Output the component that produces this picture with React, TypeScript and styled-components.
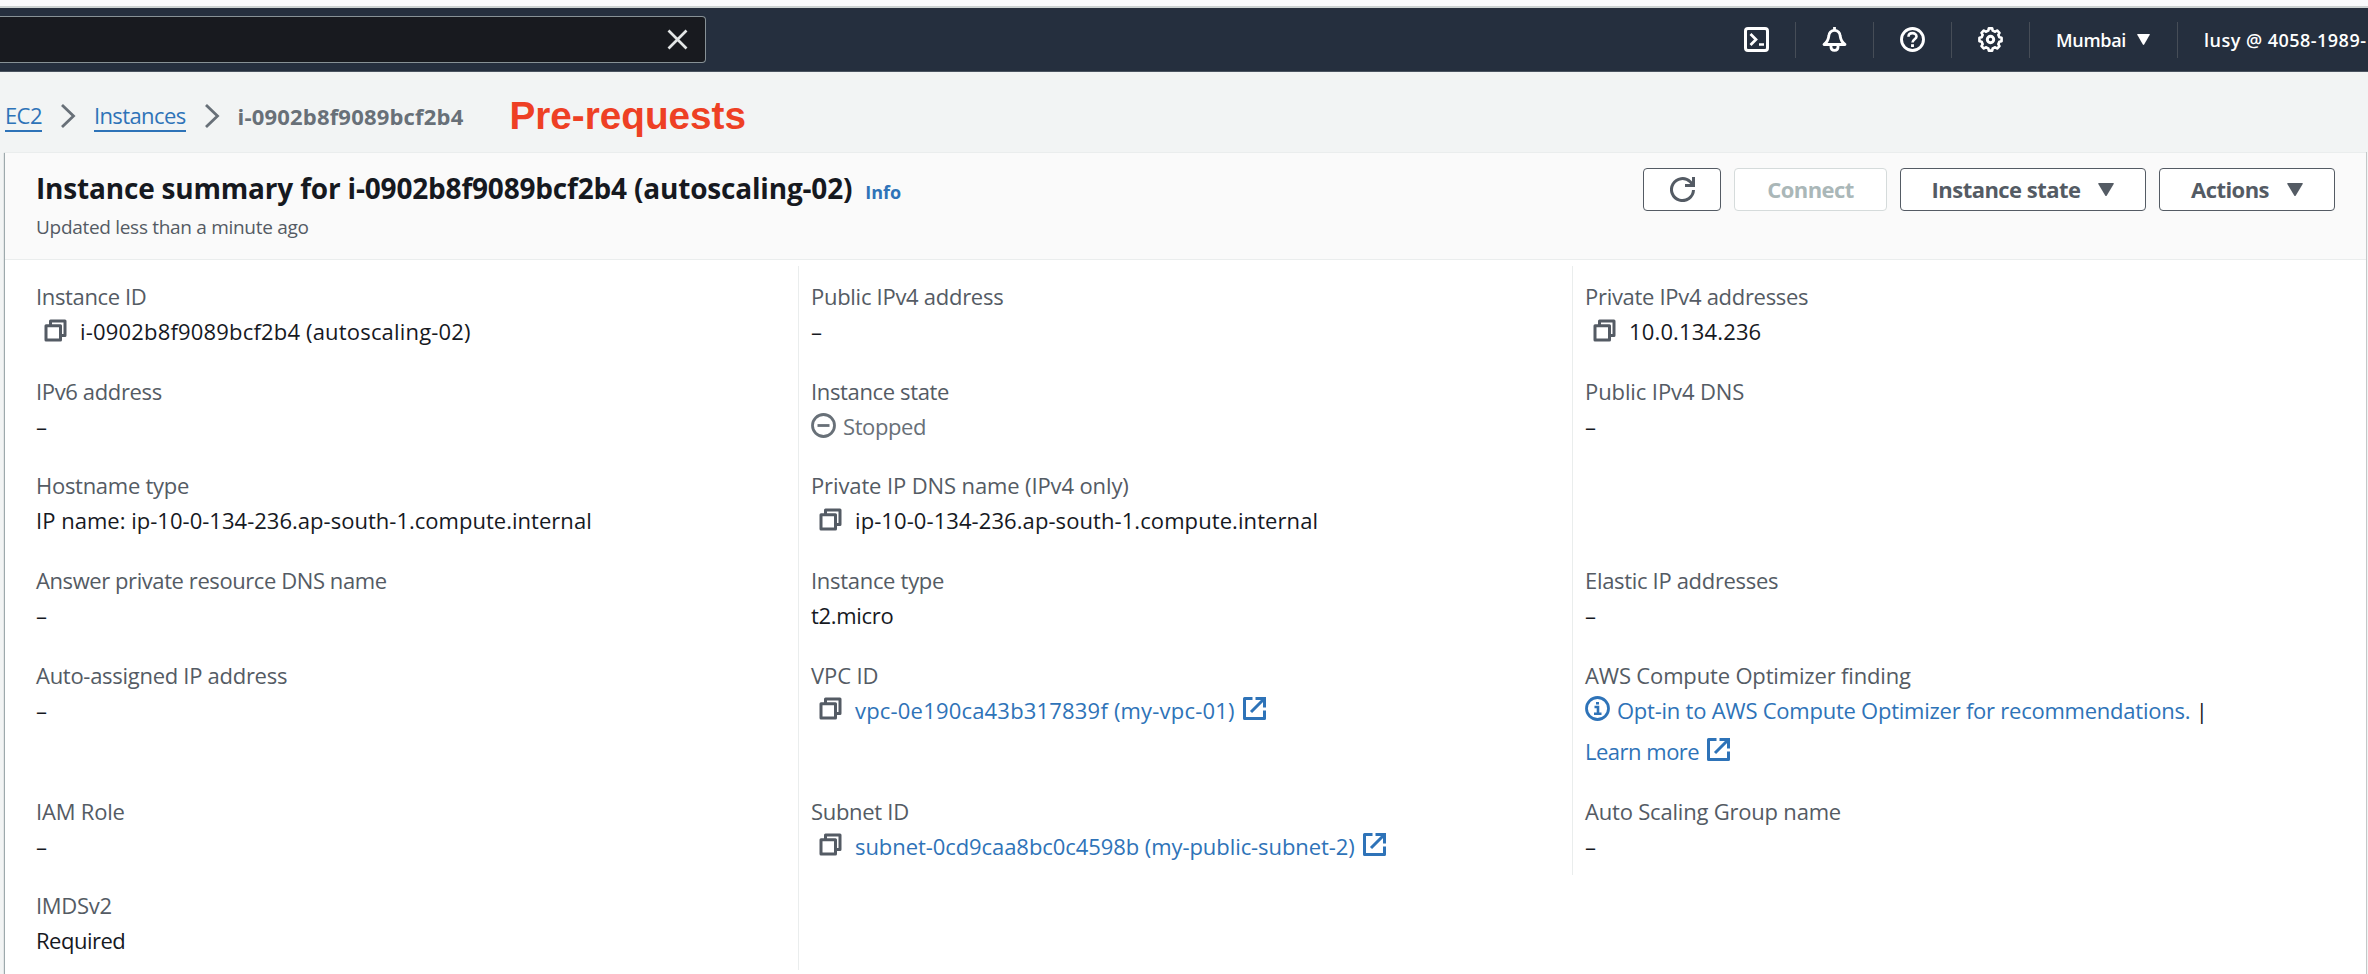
import React from "react";
import styled, { createGlobalStyle, css } from "styled-components";

const color = {
  nav: "#252f3e",
  page: "#f2f4f4",
  panelHead: "#fafafa",
  rule: "#eaeded",
  text: "#16191f",
  label: "#545b64",
  muted: "#687078",
  link: "#2e73b8",
  note: "#ee4024",
};

const GlobalStyle = createGlobalStyle`
  * { box-sizing: border-box; }
  body {
    margin: 0;
    background: ${color.page};
    color: ${color.text};
    font-family: "Open Sans", "Noto Sans", sans-serif;
    font-size: 22px;
    font-weight: 530;
    line-height: 30px;
  }
`;

const Page = styled.div`
  display: flex;
  flex-direction: column;
  width: 2368px;
  height: 974px;
  overflow: hidden;
`;

const WindowEdge = styled.div`
  flex: none;
  height: 8px;
  background: #f9fafc;
  border-bottom: 2px solid #ccd2d2;
`;

const NavBar = styled.header`
  flex: none;
  display: flex;
  justify-content: space-between;
  height: 64px;
  background: ${color.nav};
  border-bottom: 1px solid #4b5460;
`;

const SearchBox = styled.div`
  display: flex;
  align-items: center;
  justify-content: flex-end;
  width: 706px;
  height: 47px;
  margin-top: 8px;
  padding-right: 17px;
  background: #181a1f;
  border: 1px solid #879196;
  border-left: 0;
  border-radius: 0 4px 4px 0;
`;

const NavItems = styled.nav`
  display: flex;
  align-items: center;
  width: 650px;
  height: 63px;
`;

const NavItem = styled.div<{ $width: number; $last?: boolean }>`
  flex: none;
  display: flex;
  align-items: center;
  justify-content: center;
  width: ${(p) => p.$width}px;
  height: 36px;
  color: #fff;
  font-size: 18px;
  font-weight: 550;
  white-space: nowrap;
  ${(p) =>
    p.$last
      ? css`
          justify-content: flex-start;
          padding-left: 26px;
          letter-spacing: 0.48px;
        `
      : css`
          border-right: 1px solid #464d57;
        `}
`;

const Region = styled(NavItem)`
  justify-content: flex-start;
  gap: 11px;
  padding-left: 26px;
  letter-spacing: -0.3px;
`;

const Crumbs = styled.div`
  flex: none;
  display: flex;
  align-items: center;
  height: 80px;
  padding: 7px 0 0 5px;
`;

const CrumbLink = styled.a`
  height: 32px;
  line-height: 30px;
  color: ${color.link};
  border-bottom: 2px solid ${color.link};
  letter-spacing: -0.6px;
`;

const CrumbChevron = styled.svg`
  width: 16px;
  height: 24px;
  margin: 0 18px;
`;

const CrumbCurrent = styled.span`
  color: ${color.muted};
  font-weight: 700;
  letter-spacing: 0.19px;
`;

const Annotation = styled.span`
  margin-left: 46px;
  color: ${color.note};
  font: bold 38.7px/44px "Liberation Sans", Arial, sans-serif;
`;

const Panel = styled.main`
  flex: 1;
  display: flex;
  flex-direction: column;
  margin: 0 1px 0 5px;
  background: #fff;
  border-right: 1px solid #c3c8c8;
  box-shadow: -1px 1px 1px rgba(0, 28, 36, 0.35);
`;

const PanelHead = styled.div`
  flex: none;
  display: flex;
  justify-content: space-between;
  height: 108px;
  padding: 16px 31px 0 31px;
  background: ${color.panelHead};
  border-top: 1px solid ${color.rule};
  border-bottom: 1px solid ${color.rule};
`;

const TitleLine = styled.div`
  display: flex;
  align-items: baseline;
  gap: 13px;
  height: 43px;
`;

const Title = styled.h1`
  margin: 0;
  font-size: 28px;
  line-height: 38px;
  font-weight: 700;
  letter-spacing: -0.19px;
`;

const InfoLink = styled.a`
  color: ${color.link};
  font-size: 18px;
  font-weight: 700;
`;

const Updated = styled.p`
  margin: 0;
  color: ${color.label};
  font-size: 19px;
  letter-spacing: -0.3px;
`;

const ButtonRow = styled.div`
  display: flex;
  gap: 13px;
  height: 43px;
  margin-top: -1px;
`;

const Button = styled.button<{ $width: number; $disabled?: boolean }>`
  display: flex;
  align-items: center;
  justify-content: center;
  gap: 18px;
  width: ${(p) => p.$width}px;
  height: 43px;
  padding: 0;
  background: #fff;
  border: 1px solid ${(p) => (p.$disabled ? "#d5dbdb" : color.label)};
  border-radius: 4px;
  color: ${(p) => (p.$disabled ? "#aab7b8" : color.label)};
  font: inherit;
  font-weight: 700;
  letter-spacing: -0.54px;
`;

const ButtonText = styled.span`
  padding-bottom: 2px;
`;

const Details = styled.div`
  display: grid;
  grid-template-columns: 793px 774px 1fr;
  align-items: start;
  padding-top: 6px;
`;

const Column = styled.div<{ $ruled?: boolean }>`
  display: flex;
  flex-direction: column;
  padding-left: ${(p) => (p.$ruled ? 12 : 31)}px;
  border-left: ${(p) => (p.$ruled ? `1px solid ${color.rule}` : "0")};
`;

const Field = styled.div<{ $tall?: boolean }>`
  display: flex;
  flex-direction: column;
  gap: 5px;
  height: ${(p) => (p.$tall ? 136 : 94.7)}px;
  padding-top: 15px;
  white-space: nowrap;
`;

const Label = styled.div<{ $track?: number }>`
  height: 30px;
  color: ${color.label};
  letter-spacing: ${(p) => p.$track ?? -0.36}px;
`;

const Value = styled.div<{ $track?: number }>`
  display: flex;
  align-items: center;
  height: 30px;
  letter-spacing: ${(p) => p.$track ?? 0}px;
`;

const Link = styled.a`
  color: ${color.link};
`;

const SecondLine = styled(Value)`
  margin-top: 6px;
`;

const Stopped = styled.span`
  color: ${color.muted};
  letter-spacing: -0.42px;
`;

const Icon = styled.svg<{ $size: number; $before?: number; $after?: number }>`
  flex: none;
  display: block;
  width: ${(p) => p.$size}px;
  height: ${(p) => p.$size}px;
  margin: 0 ${(p) => p.$after ?? 0}px 0 ${(p) => p.$before ?? 0}px;
  fill: none;
  stroke: currentColor;
`;

const CopyGlyph = styled(Icon)`
  margin-top: -2px;
  color: ${color.label};
`;

const LinkGlyph = styled(Icon)`
  margin-top: -2px;
  color: ${color.link};
`;

const StateGlyph = styled(Icon)`
  margin-top: -1px;
  color: ${color.muted};
`;

const CopyIcon = () => (
  <CopyGlyph $size={23} $before={8} $after={13} viewBox="0 0 23 23" strokeWidth="3" strokeLinejoin="round">
    <path d="M6.500 6V2h14.500v14.500h-4" />
    <path d="M2 6.800h14.500V21H2z" />
  </CopyGlyph>
);

const ExternalIcon = () => (
  <LinkGlyph $size={23} $before={8} viewBox="0 0 23 23" strokeWidth="3">
    <path d="M9.500 1.500H1.500v20h20V13.500" strokeLinejoin="round" />
    <path d="M12.500 1.500h9v9" />
    <path d="M21 2L8 15" />
  </LinkGlyph>
);

const InfoIcon = () => (
  <LinkGlyph $size={25} $after={7} viewBox="0 0 25 25" strokeWidth="2.800">
    <circle cx="12.500" cy="12.500" r="11" />
    <path d="M9.500 11h3.500v6.500M9 17.800h7.500M11 7.300h3" strokeWidth="2.600" />
  </LinkGlyph>
);

const StoppedIcon = () => (
  <StateGlyph $size={25} $after={7} viewBox="0 0 25 25" strokeWidth="2.800">
    <circle cx="12.500" cy="12.500" r="11" />
    <path d="M6.500 12.500h12" />
  </StateGlyph>
);

const CloseIcon = () => (
  <Icon $size={21} viewBox="0 0 21 21" strokeWidth="2.700" color="#e3e6e6">
    <path d="M1.500 1.500l18 18M19.500 1.500l-18 18" />
  </Icon>
);

const RefreshIcon = () => (
  <Icon $size={25} viewBox="0 0 25 25" strokeWidth="3">
    <path d="M23.500 13a11 11 0 1 1-3.300-8.300l2.800 3" />
    <path d="M23.500 0v8.500H15" />
  </Icon>
);

const TerminalIcon = () => (
  <Icon $size={25} viewBox="0 0 25 25" strokeWidth="3">
    <rect x="1.500" y="1.500" width="22" height="22" rx="2.500" />
    <path d="M6.500 7l5.500 5.500-5.500 5.500M15 17.500h5" strokeWidth="2.700" />
  </Icon>
);

const BellIcon = () => (
  <Icon $size={25} viewBox="0 0 25 25" strokeWidth="2.800" strokeLinejoin="round">
    <path d="M12.500 0v3" />
    <path d="M2 17.500h21c-3.500-2.500-4.300-4.500-4.800-8.500a5.700 5.700 0 0 0-11.400 0c-.5 4-1.300 6-4.800 8.500z" />
    <path d="M9 18.500v1.500c0 4.500 7 4.500 7 0v-1.500" />
  </Icon>
);

const HelpIcon = () => (
  <Icon $size={25} viewBox="0 0 25 25" strokeWidth="2.900">
    <circle cx="12.500" cy="12.500" r="11" />
    <path d="M8.500 9.800c0-5 8-4.800 8-.3 0 2.800-4 2.800-4 6" strokeWidth="2.600" />
    <path d="M12.500 17.200v2.800" />
  </Icon>
);

const gearOutline = Array.from({ length: 8 }, (_, tooth) =>
  [
    [-14, 9.1],
    [-8.5, 11.2],
    [8.5, 11.2],
    [14, 9.1],
  ].map(([offset, radius]) => {
    const angle = ((tooth * 45 + offset) * Math.PI) / 180;
    return `${(12.5 + radius * Math.sin(angle)).toFixed(2)} ${(12.5 - radius * Math.cos(angle)).toFixed(2)}`;
  })
)
  .flat()
  .join("L");

const GearIcon = () => (
  <Icon $size={25} viewBox="0 0 25 25" strokeWidth="2.600" strokeLinejoin="round">
    <path d={`M${gearOutline}z`} />
    <circle cx="12.500" cy="12.500" r="3.200" strokeWidth="3" />
  </Icon>
);

const Caret = styled.svg<{ $width: number; $height: number }>`
  width: ${(p) => p.$width}px;
  height: ${(p) => p.$height}px;
  fill: currentColor;
`;

const CaretDown = ({ width, height }: { width: number; height: number }) => (
  <Caret $width={width} $height={height} viewBox="0 0 16 13" preserveAspectRatio="none">
    <path d="M.8 0h14.400q.9.200.5 1L8.800 12.500q-.8 1-1.600 0L.3 1Q0 .2.800 0z" />
  </Caret>
);

const Chevron = () => (
  <CrumbChevron viewBox="0 0 16 24" fill="none" stroke={color.muted} strokeWidth="2.800">
    <path d="M2 1l11.500 11L2 23" />
  </CrumbChevron>
);

type FieldData = {
  label: string;
  labelTrack?: number;
  value?: string;
  track?: number;
  copy?: boolean;
  link?: boolean;
  tall?: boolean;
  custom?: React.ReactNode;
};

const columns: FieldData[][] = [
  [
    { label: "Instance ID", value: "i-0902b8f9089bcf2b4 (autoscaling-02)", track: 0.18, copy: true },
    { label: "IPv6 address" },
    {
      label: "Hostname type",
      labelTrack: -0.28,
      value: "IP name: ip-10-0-134-236.ap-south-1.compute.internal",
      track: 0.02,
    },
    { label: "Answer private resource DNS name", labelTrack: -0.42 },
    { label: "Auto-assigned IP address", labelTrack: -0.28, tall: true },
    { label: "IAM Role", labelTrack: -0.2 },
    { label: "IMDSv2", labelTrack: -0.3, value: "Required", track: -0.5 },
  ],
  [
    { label: "Public IPv4 address", labelTrack: -0.28 },
    {
      label: "Instance state",
      custom: (
        <Value>
          <StoppedIcon />
          <Stopped>Stopped</Stopped>
        </Value>
      ),
    },
    {
      label: "Private IP DNS name (IPv4 only)",
      labelTrack: -0.12,
      value: "ip-10-0-134-236.ap-south-1.compute.internal",
      track: 0.08,
      copy: true,
    },
    { label: "Instance type", labelTrack: -0.3, value: "t2.micro", track: -0.3 },
    {
      label: "VPC ID",
      labelTrack: -0.1,
      value: "vpc-0e190ca43b317839f (my-vpc-01)",
      track: 0.19,
      copy: true,
      link: true,
      tall: true,
    },
    {
      label: "Subnet ID",
      labelTrack: -0.3,
      value: "subnet-0cd9caa8bc0c4598b (my-public-subnet-2)",
      track: -0.07,
      copy: true,
      link: true,
    },
    { label: "", value: "" },
  ],
  [
    { label: "Private IPv4 addresses", labelTrack: -0.3, value: "10.0.134.236", track: 0.15, copy: true },
    { label: "Public IPv4 DNS", labelTrack: -0.1 },
    { label: "", value: "" },
    { label: "Elastic IP addresses", labelTrack: -0.32 },
    {
      label: "AWS Compute Optimizer finding",
      labelTrack: -0.16,
      tall: true,
      custom: (
        <>
          <Value $track={-0.24}>
            <InfoIcon />
            <Link>Opt-in to AWS Compute Optimizer for recommendations.</Link>
            &nbsp;|
          </Value>
          <SecondLine $track={-0.5}>
            <Link>Learn more</Link>
            <ExternalIcon />
          </SecondLine>
        </>
      ),
    },
    { label: "Auto Scaling Group name", labelTrack: -0.2 },
  ],
];

const DetailField = ({ label, labelTrack, value = "–", track, copy, link, tall, custom }: FieldData) => (
  <Field $tall={tall}>
    <Label $track={labelTrack}>{label}</Label>
    {custom ?? (
      <Value $track={track}>
        {copy && <CopyIcon />}
        {link ? <Link>{value}</Link> : value}
        {link && <ExternalIcon />}
      </Value>
    )}
  </Field>
);

export default function App() {
  return (
    <Page>
      <GlobalStyle />
      <WindowEdge />
      <NavBar>
        <SearchBox>
          <CloseIcon />
        </SearchBox>
        <NavItems>
          <NavItem $width={78}><TerminalIcon /></NavItem>
          <NavItem $width={78}><BellIcon /></NavItem>
          <NavItem $width={78}><HelpIcon /></NavItem>
          <NavItem $width={78}><GearIcon /></NavItem>
          <Region $width={148}>
            Mumbai
            <CaretDown width={13} height={11} />
          </Region>
          <NavItem $width={190} $last>lusy @ 4058-1989-</NavItem>
        </NavItems>
      </NavBar>
      <Crumbs>
        <CrumbLink>EC2</CrumbLink>
        <Chevron />
        <CrumbLink>Instances</CrumbLink>
        <Chevron />
        <CrumbCurrent>i-0902b8f9089bcf2b4</CrumbCurrent>
        <Annotation>Pre-requests</Annotation>
      </Crumbs>
      <Panel>
        <PanelHead>
          <div>
            <TitleLine>
              <Title>Instance summary for i-0902b8f9089bcf2b4 (autoscaling-02)</Title>
              <InfoLink>Info</InfoLink>
            </TitleLine>
            <Updated>Updated less than a minute ago</Updated>
          </div>
          <ButtonRow>
            <Button $width={78} aria-label="Refresh"><RefreshIcon /></Button>
            <Button $width={153} $disabled><ButtonText>Connect</ButtonText></Button>
            <Button $width={246}>
              <ButtonText>Instance state</ButtonText>
              <CaretDown width={16} height={13} />
            </Button>
            <Button $width={176}>
              <ButtonText>Actions</ButtonText>
              <CaretDown width={16} height={13} />
            </Button>
          </ButtonRow>
        </PanelHead>
        <Details>
          {columns.map((fields, index) => (
            <Column key={index} $ruled={index > 0}>
              {fields.map((field, row) => (
                <DetailField key={row} {...field} />
              ))}
            </Column>
          ))}
        </Details>
      </Panel>
    </Page>
  );
}
